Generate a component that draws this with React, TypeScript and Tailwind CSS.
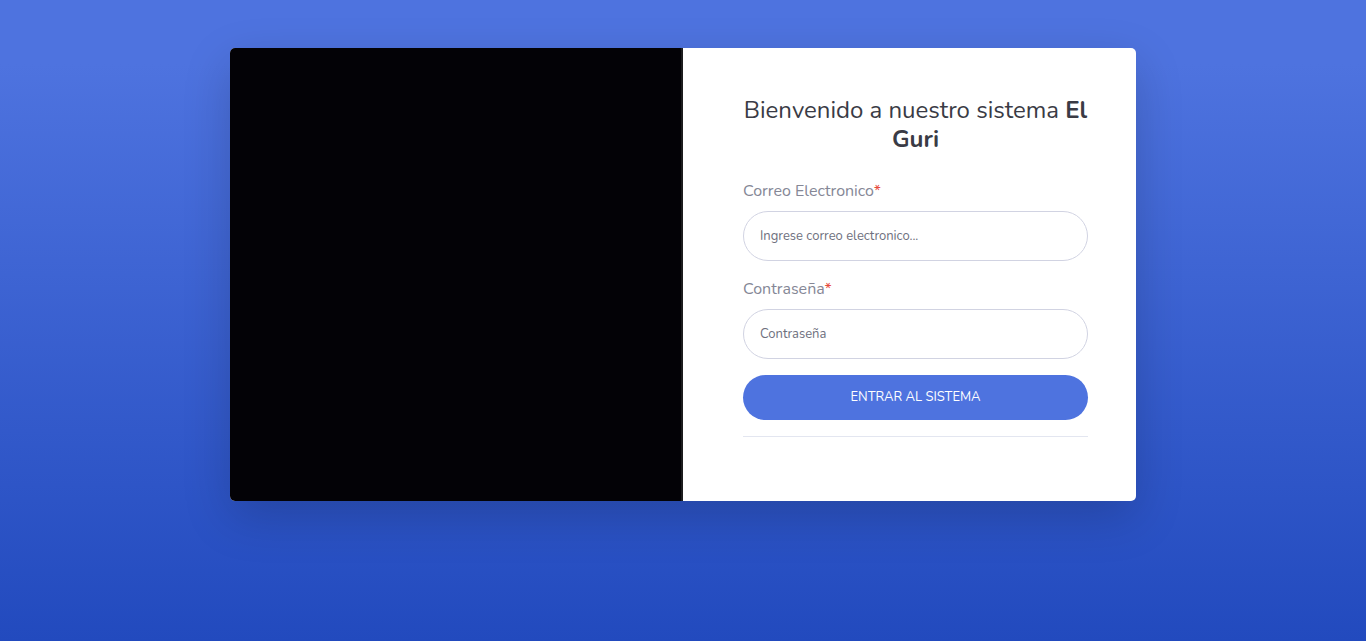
import React from 'react';

export default function App() {
  const font = { fontFamily: 'Nunito, Lato, "Noto Sans", sans-serif' };

  return (
    <div
      className="min-h-screen w-full bg-[linear-gradient(180deg,#4e73df_10%,#224abe_100%)] pt-12"
      style={font}
    >
      {/* Login card */}
      <div className="w-[906px] h-[453px] mx-auto bg-white rounded-[5px] overflow-hidden shadow-[0_1rem_3rem_rgba(0,0,0,0.175)] grid grid-cols-[453px_1fr]">
        {/* Image side */}
        <div className="bg-[#030206] border-r-2 border-[#1c1c1e]"></div>

        {/* Form side */}
        <div className="pl-[60px] pr-12 pt-12 pb-12">
          <h1 className="text-[24px] leading-[29px] text-[#3a3b45] text-center font-normal mb-[25px]">
            Bienvenido a nuestro sistema <b className="font-bold">El Guri</b>
          </h1>

          <form onSubmit={(e) => e.preventDefault()}>
            <label className="block text-[16px] leading-6 text-[#858796] mb-2">
              Correo Electronico<span className="text-[#e74a3b]">*</span>
            </label>
            <input
              type="email"
              placeholder="Ingrese correo electronico..."
              className="w-full h-[50px] rounded-full border border-[#d1d3e2] px-4 text-[13px] text-[#6e707e] placeholder:text-[#6e707e] outline-none mb-4"
            />

            <label className="block text-[16px] leading-6 text-[#858796] mb-2">
              Contraseña<span className="text-[#e74a3b]">*</span>
            </label>
            <input
              type="password"
              placeholder="Contraseña"
              className="w-full h-[50px] rounded-full border border-[#d1d3e2] px-4 text-[13px] text-[#6e707e] placeholder:text-[#6e707e] outline-none mb-4"
            />

            <button
              type="submit"
              className="w-full h-[45px] rounded-full bg-[#4e73df] text-white text-[13px] uppercase"
            >
              Entrar al sistema
            </button>
          </form>

          <hr className="mt-4 border-t border-[#e3e6f0]" />
        </div>
      </div>
    </div>
  );
}
